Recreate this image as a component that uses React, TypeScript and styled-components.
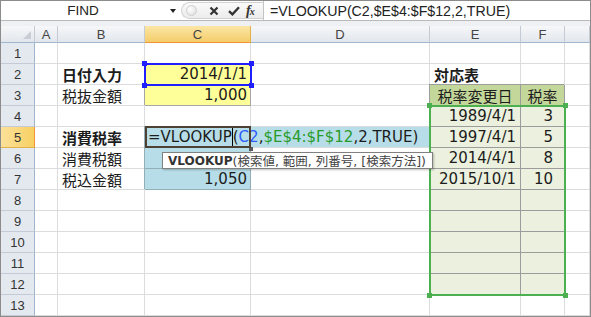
import React from "react";
import styled, { createGlobalStyle } from "styled-components";

const GlobalStyle = createGlobalStyle`
  html, body {
    margin: 0;
    padding: 0;
    background: #fff;
  }
`;

const YELLOW = "#ffff99";
const LIGHT_BLUE = "#b7dee8";
const OLIVE = "#c4d79b";
const PALE_GREEN = "#ebf1de";
const CELL_LINE = "#a6a6a6";
const TABLE_LINE = "#9c9c9c";
const BLUE_LINE = "#93aeb6";

const COLS = [
  { id: "A", w: 23 },
  { id: "B", w: 87 },
  { id: "C", w: 106 },
  { id: "D", w: 179 },
  { id: "E", w: 91 },
  { id: "F", w: 44 },
  { id: "G", w: 0 },
];
const HEAD_W = 34;
const HEAD_H = 17;
const ROW_H = 21;
const ROWS = 13;

type Align = "left" | "right" | "center";

interface CellSpec {
  text?: string;
  bold?: boolean;
  align?: Align;
  fill?: string;
  line?: string;
  pr?: number;
}

const cells: Record<string, CellSpec> = {
  B2: { text: "日付入力", bold: true },
  C2: { text: "2014/1/1", align: "right", fill: YELLOW, line: CELL_LINE },
  E2: { text: "対応表", bold: true, pr: 0 },
  B3: { text: "税抜金額" },
  C3: { text: "1,000", align: "right", fill: YELLOW, line: CELL_LINE },
  E3: { text: "税率変更日", align: "center", fill: OLIVE, line: TABLE_LINE },
  F3: { text: "税率", align: "center", fill: OLIVE, line: TABLE_LINE },
  B5: { text: "消費税率", bold: true },
  D5: { fill: LIGHT_BLUE },
  B6: { text: "消費税額" },
  C6: { fill: LIGHT_BLUE, line: BLUE_LINE },
  B7: { text: "税込金額" },
  C7: { text: "1,050", align: "right", fill: LIGHT_BLUE, line: BLUE_LINE },
};

const rates = [
  ["1989/4/1", "3"],
  ["1997/4/1", "5"],
  ["2014/4/1", "8"],
  ["2015/10/1", "10"],
];
for (let r = 4; r <= 12; r++) {
  const d = rates[r - 4];
  cells["E" + r] = { text: d?.[0], align: "right", fill: PALE_GREEN, line: TABLE_LINE, pr: 4 };
  cells["F" + r] = { text: d?.[1], align: "right", fill: PALE_GREEN, line: TABLE_LINE, pr: 11 };
}

const colLeft = (id: string) => {
  let x = HEAD_W;
  for (const c of COLS) {
    if (c.id === id) return x;
    x += c.w;
  }
  return x;
};
const rowTop = (r: number) => HEAD_H + (r - 1) * ROW_H;

const Frame = styled.div`
  width: 591px;
  height: 317px;
  box-sizing: border-box;
  border: 1px solid #8c8c8c;
  display: flex;
  flex-direction: column;
  overflow: hidden;
  background: #fff;
  font-family: "Liberation Sans", Arial, sans-serif;
`;

const FormulaBar = styled.div`
  height: 20px;
  flex-shrink: 0;
  box-sizing: border-box;
  border-bottom: 1px solid #b9b9b9;
  display: flex;
  align-items: stretch;
  background: #fff;
`;

const NameBox = styled.div`
  width: 164px;
  display: flex;
  align-items: center;
  justify-content: center;
  font-size: 13.5px;
  color: #222;
`;

const NameArrow = styled.div`
  width: 16px;
  display: flex;
  align-items: center;
  justify-content: center;

  &::before {
    content: "";
    border-left: 3px solid transparent;
    border-right: 3px solid transparent;
    border-top: 4px solid #222;
    margin-top: 1px;
  }
`;

const Tools = styled.div`
  width: 82px;
  margin: 1px 0;
  box-sizing: border-box;
  border: 1px solid #d2d2d2;
  border-right: none;
  border-radius: 9px 0 0 9px;
  background: linear-gradient(#fafafa, #ececec);
  display: flex;
  align-items: center;
  padding-left: 4px;
`;

const Grip = styled.div`
  width: 9px;
  height: 9px;
  border-radius: 50%;
  border: 1px solid #cfcfcf;
  background: radial-gradient(circle at 35% 35%, #fff, #dcdcdc);
  margin-right: 12px;
`;

const ToolIcon = styled.svg<{ $gap?: number }>`
  flex-shrink: 0;
  margin-right: ${(p) => p.$gap ?? 0}px;
`;

const Fx = styled.span`
  font-family: "Liberation Serif", "Times New Roman", serif;
  font-style: italic;
  font-weight: bold;
  font-size: 14px;
  color: #333;
  letter-spacing: -1px;

  small {
    font-size: 10px;
  }
`;

const FormulaText = styled.div`
  flex: 1;
  border-left: 1px solid #c4c4c4;
  display: flex;
  align-items: center;
  padding-left: 6px;
  font-size: 14.2px;
  color: #222;
  white-space: nowrap;
`;

const Band = styled.div`
  height: 5px;
  flex-shrink: 0;
  background: #eef0f3;
`;

const Sheet = styled.div`
  position: relative;
  display: grid;
  grid-template-columns: ${HEAD_W}px ${COLS.filter((c) => c.w).map((c) => c.w + "px").join(" ")} 1fr;
  grid-template-rows: ${HEAD_H}px repeat(${ROWS}, ${ROW_H}px);
`;

const Corner = styled.div`
  box-sizing: border-box;
  background: linear-gradient(#f6f7f9, #e2e6ec);
  border-right: 1px solid #c5cbd5;
  border-bottom: 1px solid #9eb6ce;
  display: flex;
  align-items: flex-end;
  justify-content: flex-end;
  padding: 0 3px 3px 0;

  &::after {
    content: "";
    border-left: 8px solid transparent;
    border-bottom: 8px solid #c9ced6;
  }
`;

const ColHead = styled.div<{ $active?: boolean }>`
  box-sizing: border-box;
  display: flex;
  align-items: center;
  justify-content: center;
  font-size: 13px;
  color: #444;
  background: ${(p) =>
    p.$active ? "linear-gradient(#fbe6a6, #f5cd6a)" : "linear-gradient(#f6f7f9, #e2e6ec)"};
  border-right: 1px solid ${(p) => (p.$active ? "#e3b14a" : "#c5cbd5")};
  border-bottom: 1px solid ${(p) => (p.$active ? "#f29436" : "#9eb6ce")};
`;

const RowHead = styled.div<{ $active?: boolean }>`
  box-sizing: border-box;
  display: flex;
  align-items: center;
  justify-content: center;
  font-size: 13px;
  color: #333;
  background: ${(p) => (p.$active ? "linear-gradient(90deg, #fbe19a, #f7d063)" : "#e4e8ef")};
  border-right: 1px solid ${(p) => (p.$active ? "#f29436" : "#9eb6ce")};
  border-bottom: 1px solid ${(p) => (p.$active ? "#e3b14a" : "#c5cbd6")};
`;

const Cell = styled.div<{
  $fill?: string;
  $line?: string;
  $align?: Align;
  $bold?: boolean;
  $pr?: number;
}>`
  box-sizing: border-box;
  display: flex;
  align-items: center;
  justify-content: ${(p) =>
    p.$align === "right" ? "flex-end" : p.$align === "center" ? "center" : "flex-start"};
  padding: 0 ${(p) => (p.$align === "center" ? 0 : p.$pr ?? 3)}px 0
    ${(p) => (p.$align === "center" ? 0 : 4)}px;
  background: ${(p) => p.$fill ?? "#fff"};
  border-right: 1px solid ${(p) => p.$line ?? "#dadcdd"};
  border-bottom: 1px solid ${(p) => p.$line ?? "#dadcdd"};
  box-shadow: ${(p) => (p.$line ? `-1px -1px 0 ${p.$line}` : "none")};
  font-family: "DejaVu Sans", "Noto Sans CJK JP", sans-serif;
  font-size: 15px;
  font-weight: ${(p) => (p.$bold ? 700 : 400)};
  color: #1c1c1c;
  white-space: nowrap;
  overflow: visible;
`;

const EditCell = styled(Cell)`
  position: relative;
  z-index: 1;
  padding-left: 3px;

  &::after {
    content: "";
    position: absolute;
    left: 0;
    top: -1px;
    right: -1px;
    bottom: -1px;
    border: 2px solid #4e4032;
    pointer-events: none;
  }
`;

const Caret = styled.span`
  display: inline-block;
  width: 0;
  height: 19px;
  border-left: 1px solid #000;
`;

const Ref = styled.span<{ $color: string }>`
  color: ${(p) => p.$color};
`;

const FillDot = styled.span`
  position: absolute;
  right: -3px;
  bottom: -4px;
  width: 4px;
  height: 4px;
  background: #5a5a5a;
`;

const Range = styled.div<{ $color: string }>`
  position: absolute;
  box-sizing: border-box;
  border: 2px solid ${(p) => p.$color};
  pointer-events: none;
  z-index: 2;
`;

const Handle = styled.span<{ $color: string; $v: "top" | "bottom"; $h: "left" | "right" }>`
  position: absolute;
  width: 5px;
  height: 5px;
  background: ${(p) => p.$color};
  ${(p) => p.$v}: -4px;
  ${(p) => p.$h}: -4px;
`;

const Tooltip = styled.div`
  position: absolute;
  left: 161px;
  top: 126px;
  width: 271px;
  height: 17px;
  box-sizing: border-box;
  z-index: 3;
  background: #fff;
  border: 1px solid #808080;
  box-shadow: 1px 1px 2px rgba(0, 0, 0, 0.25);
  display: flex;
  align-items: center;
  padding-left: 5px;
  font-family: "DejaVu Sans", "Noto Sans CJK JP", sans-serif;
  font-size: 12.5px;
  color: #444;
  white-space: nowrap;

  b {
    color: #333;
    font-size: 12px;
  }
`;

const RangeBox = ({
  color,
  c1,
  c2,
  r1,
  r2,
}: {
  color: string;
  c1: string;
  c2: string;
  r1: number;
  r2: number;
}) => {
  const w = COLS.find((c) => c.id === c2)!.w;
  const left = colLeft(c1) - 1;
  const top = rowTop(r1) - 1;
  const width = colLeft(c2) + w - left + 1;
  const height = rowTop(r2) + ROW_H - top + 1;
  return (
    <Range $color={color} style={{ left, top, width, height }}>
      <Handle $color={color} $v="top" $h="left" />
      <Handle $color={color} $v="top" $h="right" />
      <Handle $color={color} $v="bottom" $h="left" />
      <Handle $color={color} $v="bottom" $h="right" />
    </Range>
  );
};

export default function App() {
  const rows = Array.from({ length: ROWS }, (_, i) => i + 1);
  return (
    <>
      <GlobalStyle />
      <Frame>
        <FormulaBar>
          <NameBox>FIND</NameBox>
          <NameArrow />
          <Tools>
            <Grip />
            <ToolIcon $gap={9} width="10" height="10" viewBox="0 0 10 10">
              <path d="M1.5 1.5L8.5 8.5M8.5 1.5L1.5 8.5" stroke="#333" strokeWidth="2.2" />
            </ToolIcon>
            <ToolIcon $gap={6} width="12" height="10" viewBox="0 0 12 10">
              <path d="M1 5.2L4.4 8.4L11 1.2" stroke="#333" strokeWidth="2.3" fill="none" />
            </ToolIcon>
            <Fx>
              f<small>x</small>
            </Fx>
          </Tools>
          <FormulaText>=VLOOKUP(C2,$E$4:$F$12,2,TRUE)</FormulaText>
        </FormulaBar>
        <Band />
        <Sheet>
          <Corner />
          {COLS.map((c) => (
            <ColHead key={c.id} $active={c.id === "C"}>
              {c.id === "G" ? "" : c.id}
            </ColHead>
          ))}
          {rows.map((r) => (
            <React.Fragment key={r}>
              <RowHead $active={r === 5}>{r}</RowHead>
              {COLS.map((c) => {
                const id = c.id + r;
                if (id === "C5") {
                  return (
                    <EditCell key={id} $fill={LIGHT_BLUE} $line={BLUE_LINE}>
                      =VLOOKUP
                      <Caret />
                      (<Ref $color="#2f5bff">C2</Ref>,<Ref $color="#2a9a2a">$E$4:$F$12</Ref>
                      ,2,TRUE)
                      <FillDot />
                    </EditCell>
                  );
                }
                const s = cells[id] ?? {};
                return (
                  <Cell
                    key={id}
                    $fill={s.fill}
                    $line={s.line}
                    $align={s.align}
                    $bold={s.bold}
                    $pr={s.pr}
                  >
                    {s.text}
                  </Cell>
                );
              })}
            </React.Fragment>
          ))}
          <RangeBox color="#1f1fff" c1="C" c2="C" r1={2} r2={2} />
          <RangeBox color="#4caf50" c1="E" c2="F" r1={4} r2={12} />
          <Tooltip>
            <b>VLOOKUP</b>(検索値, 範囲, 列番号, [検索方法])
          </Tooltip>
        </Sheet>
      </Frame>
    </>
  );
}
